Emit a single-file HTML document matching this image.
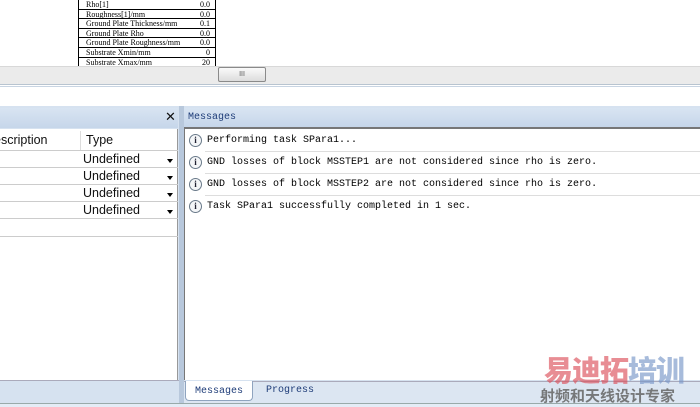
<!DOCTYPE html>
<html><head><meta charset="utf-8"><style>
*{margin:0;padding:0;box-sizing:border-box}
body{width:700px;height:407px;overflow:hidden;background:#fff;position:relative;font-family:"Liberation Sans",sans-serif}
.a{position:absolute}
.pt{left:78px;top:0;width:138px;height:66px;overflow:hidden;border-left:1px solid #000;border-right:1px solid #000;font-family:"Liberation Serif",serif;font-size:8px;color:#000}
.pt div{height:9.6px;line-height:9px;border-bottom:1px solid #000;padding:0 5px 0 7px;display:flex;justify-content:space-between;overflow:hidden}
.mono{font-family:"Liberation Mono","Noto Sans CJK SC",monospace;font-size:10px;color:#000}
.row{left:0;width:178px;height:17px;border-bottom:1px solid #ccc;font-size:12.5px;color:#111}
.row span{position:absolute;left:83px;top:0;line-height:16px}
.row i{position:absolute;left:167px;top:8px;width:0;height:0;border-left:3px solid transparent;border-right:3px solid transparent;border-top:4px solid #000}
.msg{left:186px;width:514px;height:22px}
.msg .ic{position:absolute;left:3px;top:4px;width:13px;height:13px;border:1px solid #6a7a8a;border-radius:50%;font:bold 9px "Liberation Serif",serif;text-align:center;line-height:11px;color:#223;background:#f4f6f8}
.msg .t{position:absolute;left:21px;top:5px;white-space:pre}
.msg .ln{position:absolute;left:19px;right:0;bottom:0;border-bottom:1px solid #ddd}
</style></head><body>
<div class="a pt">
<div><span>Rho[1]</span><span>0.0</span></div>
<div><span>Roughness[1]/mm</span><span>0.0</span></div>
<div><span>Ground Plate Thickness/mm</span><span>0.1</span></div>
<div><span>Ground Plate Rho</span><span>0.0</span></div>
<div><span>Ground Plate Roughness/mm</span><span>0.0</span></div>
<div><span>Substrate Xmin/mm</span><span>0</span></div>
<div><span>Substrate Xmax/mm</span><span>20</span></div>
</div>
<div class="a" style="left:0;top:66px;width:700px;height:19px;background:#ebebeb;border-top:1px solid #d8d8d8;border-bottom:1px solid #b8c4d0"></div>
<div class="a" style="left:218px;top:67px;width:48px;height:15px;border:1px solid #8a8a8a;border-radius:2px;background:linear-gradient(#fafafa,#dcdcdc);font-size:7px;text-align:center;line-height:13px;color:#555">III</div>
<div class="a" style="left:0;top:86px;width:700px;height:1px;background:#c8d4e2"></div>
<div class="a" style="left:0;top:106px;width:700px;height:300px;background:#d6e2f0"></div>
<div class="a" style="left:0;top:108px;width:178px;height:20px;background:linear-gradient(#d8e4f2,#c6d6ea)"></div>
<div class="a" style="left:165px;top:109px;font-size:13px;color:#111">✕</div>
<div class="a" style="left:184px;top:108px;width:516px;height:19px;background:linear-gradient(#d8e4f2,#c6d6ea)"></div>
<div class="a mono" style="left:188px;top:112px;color:#1e3c78;font-size:10px">Messages</div>
<div class="a" style="left:179px;top:106px;width:5px;height:300px;background:#b8c8dc"></div>
<div class="a" style="left:0;top:129px;width:178px;height:251px;background:#fff;border-right:1px solid #999"></div>
<div class="a" style="left:0;top:131px;width:178px;height:20px;border-bottom:1px solid #ccc;font-size:12.5px;color:#111"><span style="position:absolute;left:-6px;top:2px">escription</span><span style="position:absolute;left:80px;top:0;height:19px;border-left:1px solid #ddd"></span><span style="position:absolute;left:86px;top:2px">Type</span></div>
<div class="a row" style="top:151px"><span>Undefined</span><i></i></div>
<div class="a row" style="top:168px"><span>Undefined</span><i></i></div>
<div class="a row" style="top:185px"><span>Undefined</span><i></i></div>
<div class="a row" style="top:202px"><span>Undefined</span><i></i></div>
<div class="a" style="left:0;top:219px;width:178px;height:18px;border-bottom:1px solid #ccc"></div>
<div class="a" style="left:184px;top:127px;width:516px;height:253px;background:#fff;border-top:2px solid #777;border-left:1px solid #777"></div>
<div class="a msg mono" style="top:130px"><div class="ic">i</div><div class="t">Performing task SPara1...</div><div class="ln"></div></div>
<div class="a msg mono" style="top:152px"><div class="ic">i</div><div class="t">GND losses of block MSSTEP1 are not considered since rho is zero.</div><div class="ln"></div></div>
<div class="a msg mono" style="top:174px"><div class="ic">i</div><div class="t">GND losses of block MSSTEP2 are not considered since rho is zero.</div><div class="ln"></div></div>
<div class="a msg mono" style="top:196px"><div class="ic">i</div><div class="t">Task SPara1 successfully completed in 1 sec.</div></div>
<div class="a" style="left:0;top:380px;width:179px;height:1px;background:#aab"></div>
<div class="a" style="left:184px;top:381px;width:516px;height:22px;background:#dce6f2;border-top:1px solid #aab"></div>
<div class="a mono" style="left:185px;top:381px;width:68px;height:20px;background:#fff;border:1px solid #8fa4bf;border-top:none;border-radius:0 0 4px 4px;text-align:center;line-height:22px;font-size:10px;color:#1e3c78">Messages</div>
<div class="a mono" style="left:266px;top:385px;font-size:10px;color:#1e3c78">Progress</div>
<div class="a" style="left:0;top:403px;width:700px;height:4px;background:#e4ecf6;border-top:1px solid #9aa"></div>
<div class="a" style="left:544px;top:354px;font:900 29px 'Noto Sans CJK SC',sans-serif;color:rgba(220,80,90,.65);letter-spacing:-1px;line-height:30px">易迪拓<span style="color:rgba(120,150,200,.65)">培训</span></div>
<div class="a" style="left:540px;top:386px;font:bold 15px 'Noto Sans CJK SC',sans-serif;color:rgba(100,100,100,.85);line-height:19px">射频和天线设计专家</div>
</body></html>
